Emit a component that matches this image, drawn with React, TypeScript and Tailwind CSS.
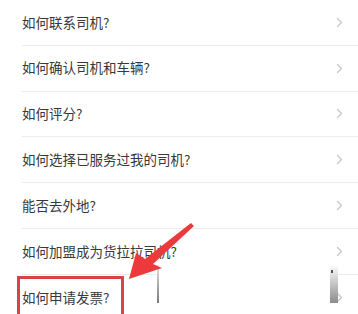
const questions = [
  "如何联系司机?",
  "如何确认司机和车辆?",
  "如何评分?",
  "如何选择已服务过我的司机?",
  "能否去外地?",
  "如何加盟成为货拉拉司机?",
  "如何申请发票?",
];

function Chevron() {
  return (
    <svg width="7" height="11" viewBox="0 0 7 11" fill="none">
      <polyline points="1.5,1.5 5.5,5.5 1.5,9.5" stroke="#c8c8c8" strokeWidth="1.4" strokeLinecap="round" strokeLinejoin="round" />
    </svg>
  );
}

export default function App() {
  return (
    <div
      className="relative w-[358px] h-[314px] overflow-hidden bg-white"
      style={{ fontFamily: '"Noto Sans CJK SC", "Noto Sans", sans-serif' }}
    >
      <ul className="flex flex-col">
        {questions.map((q, i) => (
          <li
            key={q}
            className={
              "ml-[22px] h-[45.8px] flex items-center justify-between pr-[15px] " +
              (i < questions.length - 1 ? "border-b border-[#ececec]" : "")
            }
          >
            <span className="text-[13.5px] text-[#383838] leading-none">{q}</span>
            <Chevron />
          </li>
        ))}
      </ul>

      {/* cut-off screenshot edge on top of the last row */}
      <div className="absolute left-[157px] top-[265px] w-[181px] h-[38px] bg-white flex justify-between">
        <div className="w-[2px] h-full bg-gradient-to-b from-[#e6e6e6] to-[#7a7a7a]" />
        <div className="relative w-[8px] h-full bg-gradient-to-b from-white to-[#8c8c8c]">
          <div className="absolute left-[1px] top-[5px] w-[2px] h-[3px] bg-[#555]" />
        </div>
      </div>

      {/* annotation box */}
      <div className="absolute left-[17px] top-[276px] w-[107px] h-[50px] border-[3px] border-[#d8434b]" />

      {/* annotation arrow */}
      <svg className="absolute left-0 top-0" width="358" height="314" viewBox="0 0 358 314">
        <polygon
          points="129,279 136,253 145,259 191,223 194,226 153,264 162,268"
          fill="#ec3a3c"
        />
      </svg>
    </div>
  );
}
